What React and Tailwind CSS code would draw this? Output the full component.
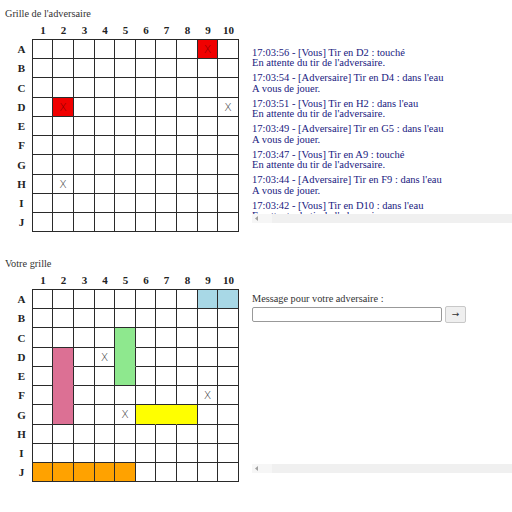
import React from "react";

const COLS = "grid-cols-[20px_21px_21px_20px_21px_20px_21px_21px_20px_21px]";
const ROWS = "grid-rows-[19px_19px_20px_19px_19px_19px_20px_19px_19px_19px]";
const LETTERS = ["A", "B", "C", "D", "E", "F", "G", "H", "I", "J"];

const enemy = {
  A9: { cls: "bg-[#f00000]", x: "hit" },
  D2: { cls: "bg-[#f00000]", x: "hit" },
  D10: { cls: "", x: "miss" },
  H2: { cls: "", x: "miss" },
};

const mine = {
  A9: { cls: "bg-[#a8d8e6]" },
  A10: { cls: "bg-[#a8d8e6]" },
  C5: { cls: "bg-[#8ee88e] border-b-[#8ee88e]" },
  D5: { cls: "bg-[#8ee88e] border-b-[#8ee88e]" },
  E5: { cls: "bg-[#8ee88e]" },
  D2: { cls: "bg-[#dc7094] border-b-[#dc7094]" },
  E2: { cls: "bg-[#dc7094] border-b-[#dc7094]" },
  F2: { cls: "bg-[#dc7094] border-b-[#dc7094]" },
  G2: { cls: "bg-[#dc7094]" },
  G6: { cls: "bg-[#ffff00] border-r-[#ffff00]" },
  G7: { cls: "bg-[#ffff00] border-r-[#ffff00]" },
  G8: { cls: "bg-[#ffff00]" },
  J1: { cls: "bg-[#ffa200]" },
  J2: { cls: "bg-[#ffa200]" },
  J3: { cls: "bg-[#ffa200]" },
  J4: { cls: "bg-[#ffa200]" },
  J5: { cls: "bg-[#ffa200]" },
  D4: { cls: "", x: "miss" },
  F9: { cls: "", x: "miss" },
  G5: { cls: "", x: "miss" },
};

function Board({ data }) {
  const cells = [];
  LETTERS.forEach((l) => {
    for (let c = 1; c <= 10; c++) {
      const spec = data[l + c] || { cls: "" };
      cells.push(
        <div
          key={l + c}
          className={
            "flex items-center justify-center border-r border-b border-[#2a2a2a] " +
            (spec.cls || "bg-white")
          }
        >
          {spec.x === "miss" && (
            <span className="text-[11px] leading-none text-[#444] font-['DejaVu_Sans',sans-serif] font-extralight">X</span>
          )}
          {spec.x === "hit" && (
            <span className="text-[11px] leading-none text-[#8a0000] font-['DejaVu_Sans',sans-serif] font-extralight">X</span>
          )}
        </div>
      );
    }
  });
  return (
    <div className="flex">
      <div className="flex flex-col">
        <div className="h-[18px]" />
        <div className={"grid w-[27px] mt-px " + ROWS}>
          {LETTERS.map((l) => (
            <div key={l} className="flex items-center justify-center pl-[6px] font-bold text-[11px] text-[#222]">
              {l}
            </div>
          ))}
        </div>
      </div>
      <div className="flex flex-col">
        <div className={"grid h-[18px] pl-px " + COLS}>
          {Array.from({ length: 10 }, (_, i) => (
            <div key={i} className="flex items-center justify-center font-bold text-[11px] text-[#222]">
              {i + 1}
            </div>
          ))}
        </div>
        <div className={"grid border-l border-t border-[#2a2a2a] " + COLS + " " + ROWS}>{cells}</div>
      </div>
    </div>
  );
}

function Scrollbar() {
  return (
    <div className="flex h-[9px] w-[300px] items-center bg-[#f0f0f0]">
      <div className="flex h-full w-[20px] items-center bg-[#f6f6f6] pl-[3px]">
        <svg width="4" height="5" viewBox="0 0 4 5">
          <path d="M3 0 L0 2.5 L3 5 Z" fill="#a0a0a0" />
        </svg>
      </div>
    </div>
  );
}

const log = [
  ["17:03:56 - [Vous] Tir en D2 : touché", "En attente du tir de l'adversaire."],
  ["17:03:54 - [Adversaire] Tir en D4 : dans l'eau", "A vous de jouer."],
  ["17:03:51 - [Vous] Tir en H2 : dans l'eau", "En attente du tir de l'adversaire."],
  ["17:03:49 - [Adversaire] Tir en G5 : dans l'eau", "A vous de jouer."],
  ["17:03:47 - [Vous] Tir en A9 : touché", "En attente du tir de l'adversaire."],
  ["17:03:44 - [Adversaire] Tir en F9 : dans l'eau", "A vous de jouer."],
  ["17:03:42 - [Vous] Tir en D10 : dans l'eau", "En attente du tir de l'adversaire."],
];

export default function App() {
  return (
    <div className="w-[512px] h-[512px] overflow-hidden bg-white font-['Liberation_Serif',serif] text-[#333]">
      {/* Section 1 */}
      <div className="h-[250px] pl-[5px] pt-[7px]">
        <div className="h-[14px] text-[10.3px] leading-[14px] text-[#333]">Grille de l'adversaire</div>
        <div className="flex">
          <Board data={enemy} />
          <div className="ml-[13px] flex flex-col">
            <div className="h-[166px] w-[300px] mt-[26.5px] overflow-hidden text-[10.5px] leading-[10.5px] text-[#202080]">
              {log.map(([a, b], i) => (
                <div key={i} className="mb-[4.5px] whitespace-nowrap">
                  <div>{a}</div>
                  <div>{b}</div>
                </div>
              ))}
            </div>
            <Scrollbar />
          </div>
        </div>
      </div>
      {/* Section 2 */}
      <div className="h-[250px] pl-[5px] pt-[7px]">
        <div className="h-[14px] text-[10.3px] leading-[14px] text-[#333]">Votre grille</div>
        <div className="flex">
          <Board data={mine} />
          <div className="ml-[13px] flex flex-col">
            <div className="mt-[22px] h-[12px] text-[10.3px] leading-[12px] text-[#333]">Message pour votre adversaire :</div>
            <div className="mt-px flex items-center">
              <div className="h-[15px] w-[190px] rounded-[2px] border border-[#999] bg-white" />
              <div className="ml-[3px] flex h-[17px] w-[21px] items-center justify-center rounded-[2px] border border-[#c8c8c8] bg-[#efefef] text-[9px] leading-none text-[#333] font-['DejaVu_Sans',sans-serif]">
                →
              </div>
            </div>
            <div className="h-[141px]" />
            <Scrollbar />
          </div>
        </div>
      </div>
    </div>
  );
}
